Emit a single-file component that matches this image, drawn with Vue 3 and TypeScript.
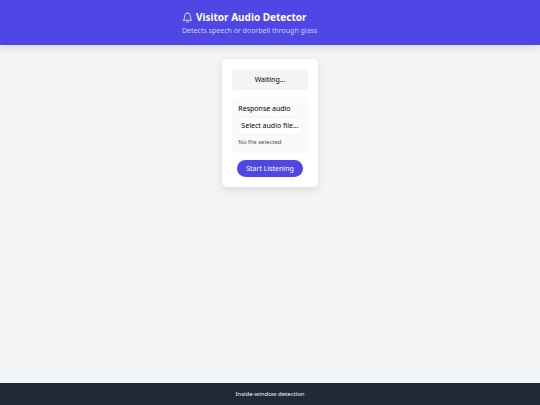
<script setup lang="ts">
import { ref } from 'vue'

const listening = ref(false)
const fileName = ref('')
const picker = ref<HTMLInputElement | null>(null)

function onFile(event: Event) {
  const input = event.target as HTMLInputElement
  fileName.value = input.files?.[0]?.name ?? ''
}
</script>

<template>
  <div class="page">
    <header class="header">
      <div class="header-inner">
        <h1 class="title">
          <svg class="bell" viewBox="0 0 24 24" fill="none" stroke="currentColor" stroke-width="2" stroke-linecap="round" stroke-linejoin="round" aria-hidden="true">
            <path d="M12 2a6 6 0 0 0-6 6c0 7-3 9-3 10h18c0-1-3-3-3-10a6 6 0 0 0-6-6z" />
            <path d="M9.5 21.5a3 3 0 0 0 5 0" />
          </svg>
          <span>Visitor Audio Detector</span>
        </h1>
        <p class="subtitle">Detects speech or doorbell through glass</p>
      </div>
    </header>

    <main class="main">
      <div class="card">
        <div class="status" role="status">{{ listening ? 'Listening...' : 'Waiting...' }}</div>
        <section class="response">
          <h2 class="label">Response audio</h2>
          <button class="select" type="button" @click="picker?.click()">Select audio file...</button>
          <input ref="picker" type="file" accept="audio/*" aria-label="Response audio" hidden @change="onFile" />
          <p class="file">{{ fileName || 'No file selected' }}</p>
        </section>
        <button class="start" type="button" @click="listening = !listening">
          {{ listening ? 'Stop Listening' : 'Start Listening' }}
        </button>
      </div>
    </main>

    <footer class="footer">Inside-window detection</footer>
  </div>
</template>

<style>
body {
  background: #f3f4f6;
}
</style>

<style scoped>
.page {
  display: flex;
  flex-direction: column;
  min-height: 100vh;
  font-family: "Noto Sans", sans-serif;
  font-size: 7px;
  line-height: 10px;
  color: #000;
  background: #f3f4f6;
}

h1,
h2,
p {
  margin: 0;
}

button {
  font-family: inherit;
  cursor: pointer;
}

.header {
  padding: 10px;
  color: #fff;
  background: #4f46e5;
  box-shadow: 0 3px 8px rgba(0, 0, 0, 0.1);
}

.header-inner {
  max-width: 176px;
  margin: 0 auto;
}

.title {
  display: flex;
  align-items: center;
  gap: 3px;
  font-size: 10px;
  line-height: 14px;
  font-weight: 700;
}

.bell {
  width: 11px;
  height: 11px;
  color: #e0e7ff;
}

.subtitle {
  margin-top: 2px;
  line-height: 9px;
  color: #c7d2fe;
}

.main {
  display: flex;
  flex: 1;
  justify-content: center;
  align-items: flex-start;
  padding: 14px;
}

.card {
  display: flex;
  flex-direction: column;
  align-items: center;
  gap: 7px;
  padding: 10px;
  border-radius: 5px;
  background: #fff;
  box-shadow: 0 3px 8px rgba(0, 0, 0, 0.1);
}

.status {
  align-self: stretch;
  padding: 5px;
  border-radius: 3px;
  line-height: 11px;
  text-align: center;
  background: #f3f4f6;
}

.response {
  padding: 6px;
  border-radius: 3px;
  background: #f9fafb;
}

.label {
  font-size: 7px;
  line-height: 11px;
  font-weight: 400;
}

.select {
  display: block;
  margin: 3px 0;
  padding: 3px 2px;
  border: 1px solid #f3f4f6;
  border-radius: 3px;
  font-size: 7px;
  line-height: 10px;
  color: #000;
  background: #fff;
}

.file {
  font-size: 6px;
  line-height: 9px;
  color: #4b5563;
}

.start {
  padding: 3px 9px;
  border: 0;
  border-radius: 9px;
  font-size: 7px;
  line-height: 11px;
  color: #fff;
  background: #4f46e5;
}

.footer {
  padding: 6px;
  font-size: 6px;
  line-height: 10px;
  text-align: center;
  color: #f3f4f6;
  background: #1f2937;
}
</style>
